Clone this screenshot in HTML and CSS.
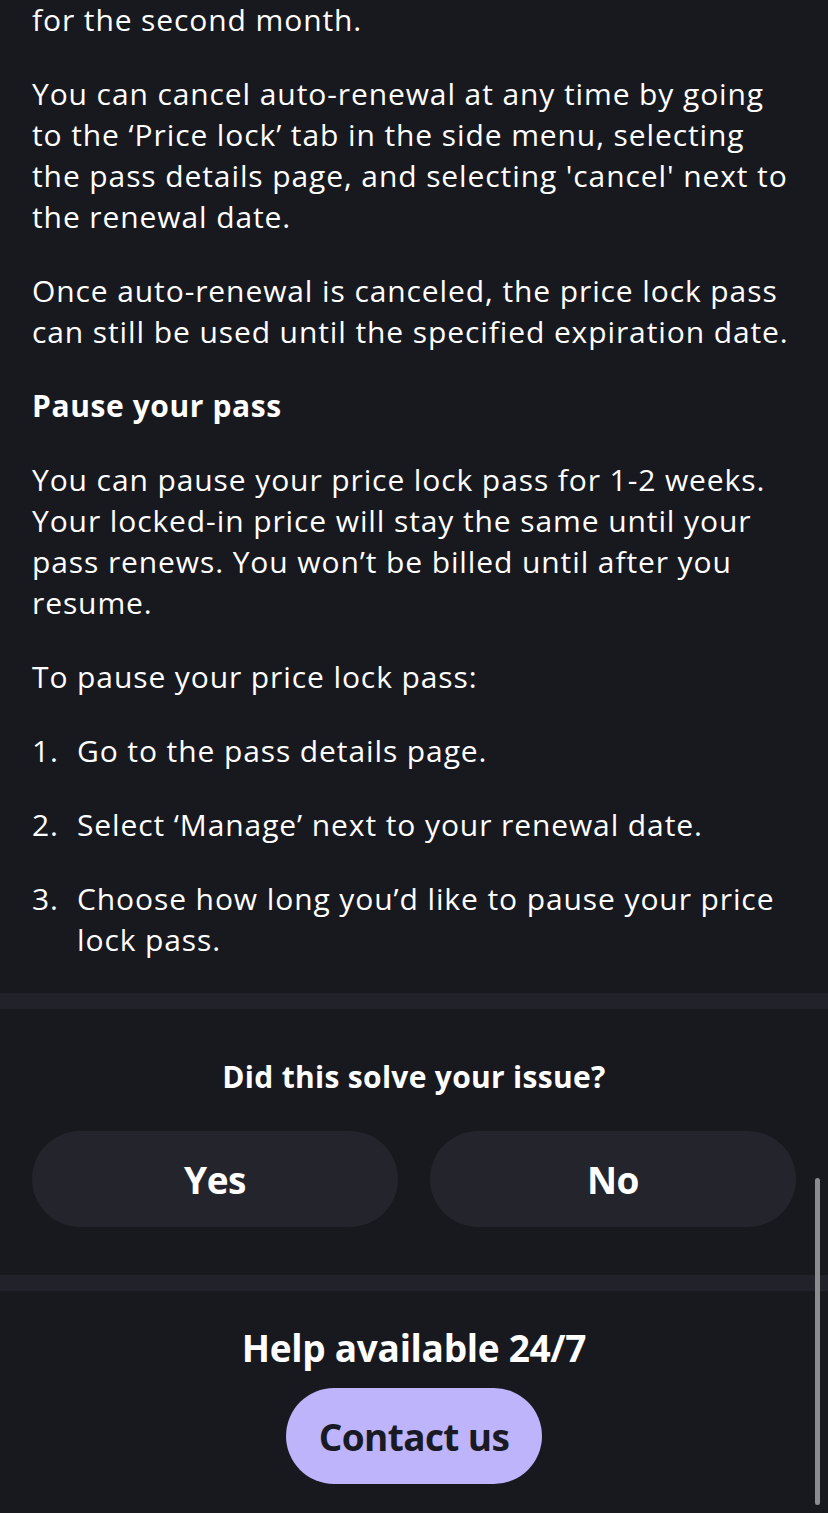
FILE: index.html
```html
<!DOCTYPE html>
<html>
<head>
<meta charset="utf-8">
<link rel="stylesheet" href="styles.css">
</head>
<body>
<main class="article">
  <p class="para">for the second month.</p>
  <p class="para">You can cancel auto-renewal at any time by going to the ‘Price lock’ tab in the side menu, selecting the&nbsp;pass details page, and selecting 'cancel' next to the renewal date.</p>
  <p class="para">Once auto-renewal is canceled, the price lock pass can still be used until the specified expiration date.</p>
  <p class="para heading">Pause your pass</p>
  <p class="para">You can pause your price lock pass for 1-2 weeks. Your locked-in price will stay the same until your pass renews. You won’t be billed until after you resume.</p>
  <p class="para">To pause your price lock pass:</p>
  <ol class="steps">
    <li class="step"><span class="num">1.</span><span class="txt">Go to the pass details page.</span></li>
    <li class="step"><span class="num">2.</span><span class="txt">Select ‘Manage’ next to your renewal date.</span></li>
    <li class="step"><span class="num">3.</span><span class="txt">Choose how long you’d like to pause your price lock pass.</span></li>
  </ol>
</main>
<div class="divider"></div>
<section class="feedback">
  <h2 class="feedback-title">Did this solve your issue?</h2>
  <div class="choices">
    <button class="choice">Yes</button>
    <button class="choice">No</button>
  </div>
</section>
<div class="divider"></div>
<section class="help">
  <h2 class="help-title">Help available 24/7</h2>
  <button class="contact">Contact us</button>
</section>
<div class="scrollbar"></div>
</body>
</html>
```
FILE: styles.css
```css
html, body {
  margin: 0;
  padding: 0;
  background: #18191f;
  color: #ffffff;
}
body {
  font-family: "Open Sans", "Noto Sans", sans-serif;
  width: 828px;
  height: 1513px;
  overflow: hidden;
  position: relative;
}
.article {
  padding: 0 32px 0 32px;
  margin-top: -1px;
}
.para {
  margin: 0 0 33px 0;
  font-size: 30px;
  line-height: 41px;
  letter-spacing: 0.9px;
}
.heading {
  font-weight: 700;
  letter-spacing: 0.6px;
}
.steps {
  list-style: none;
  margin: 0;
  padding: 0;
}
.step {
  display: flex;
  font-size: 30px;
  line-height: 41px;
  letter-spacing: 0.9px;
  margin-bottom: 33px;
}
.num {
  width: 45px;
  flex: none;
}
.divider {
  height: 16px;
  background: #22232a;
}
.feedback {
  padding: 48px 32px 48px;
  display: flex;
  flex-direction: column;
  align-items: center;
}
.feedback-title {
  margin: 0;
  font-size: 30px;
  line-height: 40px;
  font-weight: 700;
  letter-spacing: 0.3px;
}
.choices {
  margin-top: 34px;
  display: flex;
  gap: 32px;
  width: 100%;
}
.choice {
  flex: 1;
  height: 96px;
  border: none;
  border-radius: 48px;
  background: #24252c;
  color: #ffffff;
  font-family: inherit;
  font-size: 37px;
  font-weight: 700;
  letter-spacing: -0.5px;
}
.help {
  display: flex;
  flex-direction: column;
  align-items: center;
  padding-top: 35px;
}
.help-title {
  margin: 0;
  font-size: 37px;
  line-height: 44px;
  font-weight: 700;
  letter-spacing: -0.3px;
}
.contact {
  margin-top: 18px;
  width: 256px;
  height: 96px;
  border: none;
  border-radius: 48px;
  background: #bdb4fb;
  color: #1a1a24;
  font-family: inherit;
  font-size: 37px;
  font-weight: 700;
  letter-spacing: -0.6px;
}
.scrollbar {
  position: absolute;
  right: 8px;
  top: 1178px;
  width: 5px;
  height: 327px;
  border-radius: 3px;
  background: #8b8b90;
}
```
